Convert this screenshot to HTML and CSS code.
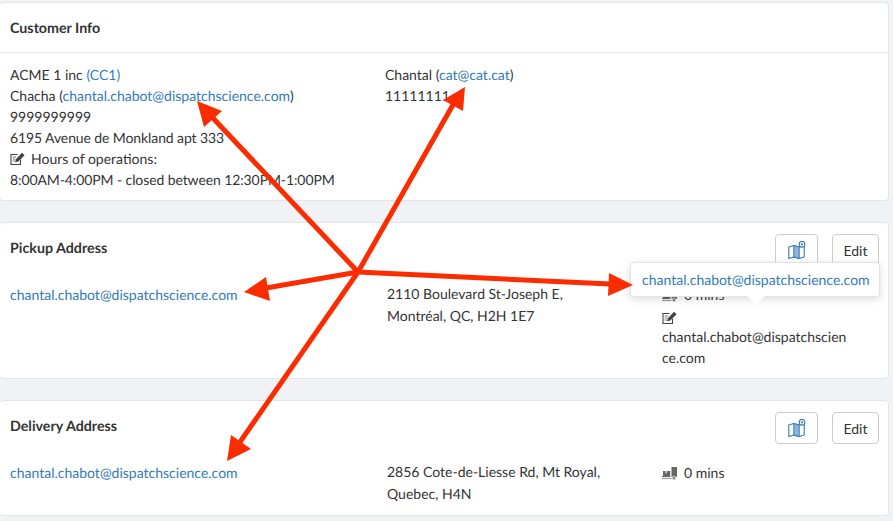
FILE: index.html
```html
<!DOCTYPE html>
<html>
<head>
<meta charset="utf-8">
<title>Customer Info</title>
<link rel="stylesheet" href="styles.css">
</head>
<body>
<svg width="0" height="0" class="defs">
  <symbol id="note" viewBox="0 0 15 14">
    <path d="M10.500 8v5H1V3h6.500" fill="none" stroke="#444" stroke-width="1.100"/>
    <path d="M2.700 5.500h3.500M2.700 7.500h2.500M2.700 9.500h2" stroke="#555" stroke-width=".8"/>
    <path d="M5 10.800l.9-3L12 1.300l2.600 2.500-6.300 6.200z" fill="#444"/>
  </symbol>
  <symbol id="map" viewBox="0 0 18 18">
    <path d="M.8 6l5-1.500 5.400 1.500 5-1.500v11.500l-5 1.500-5.400-1.500-5 1.500z" fill="#fff" stroke="#337ab7" stroke-width="1.100" stroke-linejoin="round"/>
    <path d="M5.800 4.500l5.400 1.500v11.500l-5.400-1.500z" fill="#8fb5d8" stroke="#337ab7" stroke-width="1"/>
    <circle cx="14" cy="3.300" r="2.800" fill="#fff" stroke="#337ab7" stroke-width="1.100"/>
    <circle cx="14" cy="3.300" r="1.100" fill="#337ab7"/>
  </symbol>
  <symbol id="truck" viewBox="0 0 16 13">
    <path d="M9.500 0H15V10H9.500z" fill="#666"/>
    <path d="M0 9h1V4h2.500v2.200h1.200V4H8.200v6H0z" fill="#666"/>
    <path d="M0 11.500h9.500" stroke="#999" stroke-width="1.200"/>
    <circle cx="12" cy="11" r="1.900" fill="#888" stroke="#fff" stroke-width=".6"/>
  </symbol>
</svg>

<main class="page">
  <section class="card customer">
    <header class="customer-head"><h2>Customer Info</h2></header>
    <div class="customer-body">
      <div class="customer-left">
        <div>ACME 1 inc <a href="#">(CC1)</a></div>
        <div>Chacha (<a href="#">chantal.chabot@dispatchscience.com</a>)</div>
        <div>9999999999</div>
        <div class="tight">6195 Avenue de Monkland apt 333</div>
        <div class="hours"><svg class="icon-note"><use href="#note"/></svg>Hours of operations:</div>
        <div class="tight">8:00AM-4:00PM - closed between 12:30PM-1:00PM</div>
      </div>
      <div class="customer-right">
        <div>Chantal (<a href="#">cat@cat.cat</a>)</div>
        <div>11111111</div>
      </div>
    </div>
  </section>

  <section class="card address pickup">
    <div class="address-head">
      <h2>Pickup Address</h2>
      <div class="actions">
        <button class="btn btn-map"><svg class="icon-map"><use href="#map"/></svg></button>
        <button class="btn btn-edit">Edit</button>
      </div>
    </div>
    <div class="address-body">
      <div class="col-email"><a href="#">chantal.chabot@dispatchscience.com</a></div>
      <div class="col-street">2110 Boulevard St-Joseph E, Montréal, QC, H2H 1E7</div>
      <div class="col-time">
        <div class="mins"><svg class="icon-truck"><use href="#truck"/></svg>0 mins</div>
        <div class="note-row"><svg class="icon-note"><use href="#note"/></svg></div>
        <div class="note-text">chantal.chabot@dispatchscience.com</div>
      </div>
    </div>
    <div class="tooltip"><a href="#">chantal.chabot@dispatchscience.com</a></div>
  </section>

  <section class="card address delivery">
    <div class="address-head">
      <h2>Delivery Address</h2>
      <div class="actions">
        <button class="btn btn-map"><svg class="icon-map"><use href="#map"/></svg></button>
        <button class="btn btn-edit">Edit</button>
      </div>
    </div>
    <div class="address-body">
      <div class="col-email"><a href="#">chantal.chabot@dispatchscience.com</a></div>
      <div class="col-street">2856 Cote-de-Liesse Rd, Mt Royal, Quebec, H4N</div>
      <div class="col-time">
        <div class="mins"><svg class="icon-truck"><use href="#truck"/></svg>0 mins</div>
      </div>
    </div>
  </section>
</main>

<svg class="arrows" width="893" height="521" viewBox="0 0 893 521">
  <g stroke="#fb2d00" stroke-width="5" fill="none">
    <path d="M358 272L211 116"/>
    <path d="M358 272L454 103"/>
    <path d="M358 272L266 288"/>
    <path d="M358 272L610 284"/>
    <path d="M358 272L240 442"/>
  </g>
  <g fill="#fb2d00">
    <path d="M197 101L222 111 204 127z"/>
    <path d="M465 87L463 111 443 100z"/>
    <path d="M244 292L266 277 270 301z"/>
    <path d="M633 285L609 273 608 296z"/>
    <path d="M227 461L231 435 251 449z"/>
  </g>
</svg>
</body>
</html>
```

FILE: styles.css
```css
* {
  box-sizing: border-box;
}

html,
body {
  margin: 0;
  padding: 0;
  width: 893px;
  height: 521px;
  overflow: hidden;
}

body {
  position: relative;
  background: #f0f2f6;
  font-family: Lato, "Liberation Sans", sans-serif;
  font-size: 14px;
  line-height: 21px;
  color: #333;
  text-rendering: geometricPrecision;
}

.defs {
  position: absolute;
}

a {
  color: #337ab7;
  text-decoration: none;
}

h2 {
  margin: 0;
  font-size: 14.25px;
  font-weight: 700;
  line-height: 20px;
  color: #333;
}

.tight {
  letter-spacing: -0.1px;
}

.page {
  display: flex;
  flex-direction: column;
  gap: 21px;
  width: 890px;
  margin-left: -1px;
  padding-top: 2px;
}

.card {
  position: relative;
  background: #fff;
  border: 1px solid #e3e5e9;
  border-radius: 4px;
}

.customer {
  height: 199px;
}

.customer-head {
  height: 50px;
  padding: 16px 10px 0;
  border-bottom: 1px solid #e3e5e9;
}

.customer-body {
  display: flex;
  padding: 11px 10px 0;
}

.customer-left {
  width: 375px;
}

.hours {
  display: flex;
  align-items: center;
}

.hours .icon-note {
  margin-right: 6px;
}

.icon-note {
  width: 15px;
  height: 15px;
  flex: none;
}

.address {
  padding: 11px 9px 0 10px;
}

.pickup {
  height: 157px;
}

.delivery {
  height: 116px;
}

.address-head {
  display: flex;
  justify-content: space-between;
  align-items: flex-start;
}

.address-head h2 {
  margin-top: 5px;
}

.actions {
  display: flex;
  gap: 14px;
}

.btn {
  height: 32px;
  padding: 0;
  background: #fff;
  border: 1px solid #ccc;
  border-radius: 4px;
  font: inherit;
  color: #333;
}

.btn-edit {
  width: 47px;
}

.btn-map {
  display: flex;
  align-items: center;
  justify-content: center;
  width: 43px;
}

.icon-map {
  width: 18px;
  height: 18px;
}

.address-body {
  display: flex;
  margin-top: 16px;
  line-height: 22px;
}

.col-email {
  width: 377px;
  padding-top: 2px;
}

.col-street {
  width: 275px;
  padding-right: 50px;
  padding-top: 1px;
}

.col-time {
  width: 187px;
  padding-top: 2px;
}

.mins {
  display: flex;
  align-items: center;
}

.icon-truck {
  width: 16px;
  height: 13px;
  margin-right: 6px;
}

.note-row {
  display: flex;
  align-items: center;
  height: 22px;
}

.note-text {
  margin-top: -2px;
  line-height: 21px;
  word-break: break-all;
}

.tooltip {
  position: absolute;
  top: 39px;
  left: 630px;
  width: 250px;
  height: 35px;
  padding: 6px 11px;
  background: #fff;
  border: 1px solid #e3e3e3;
  border-radius: 4px;
  box-shadow: 0 2px 8px rgba(0, 0, 0, 0.15);
  white-space: nowrap;
}

.tooltip::after {
  content: "";
  position: absolute;
  left: 116px;
  bottom: -9px;
  width: 0;
  height: 0;
  border-left: 9px solid transparent;
  border-right: 9px solid transparent;
  border-top: 9px solid #fff;
}

.arrows {
  position: absolute;
  top: 0;
  left: 0;
  pointer-events: none;
}
```
